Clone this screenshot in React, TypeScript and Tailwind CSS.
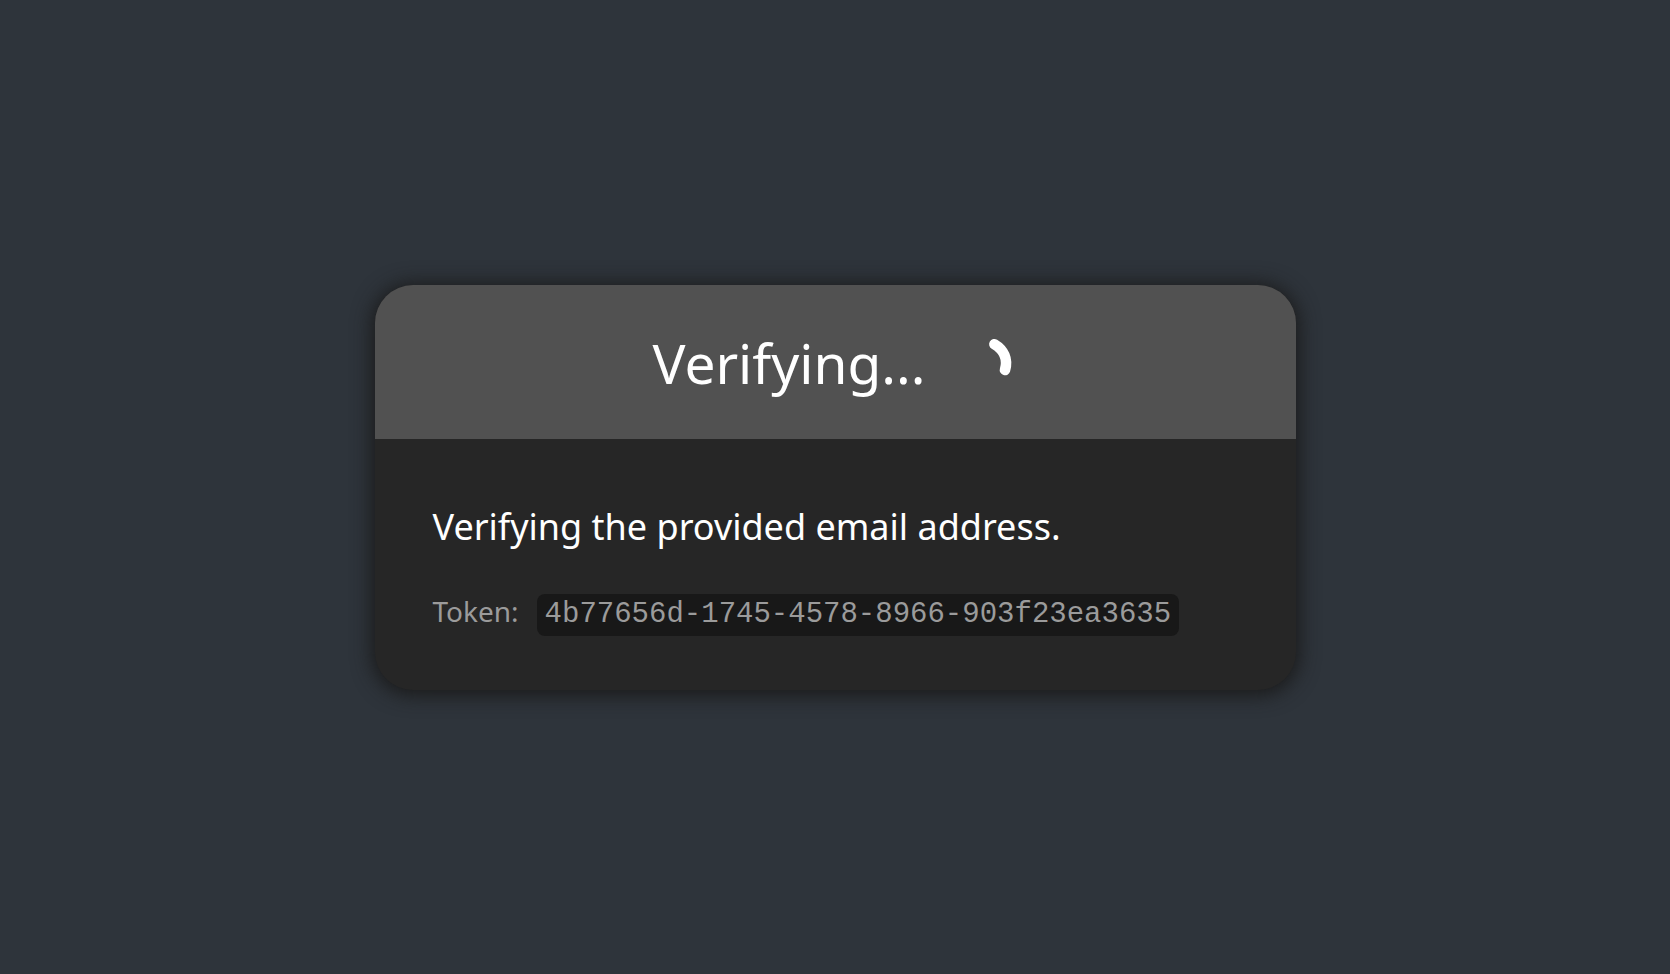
function Spinner() {
  return (
    <svg
      className="size-[60px] shrink-0"
      viewBox="0 0 60 60"
      fill="none"
      stroke="white"
      strokeWidth="10.6"
      strokeLinecap="round"
      role="img"
      aria-label="Loading"
    >
      <path d="M36.4 11.2C45.8 16.8 50.2 26 47 37" />
    </svg>
  );
}

export default function App() {
  return (
    <main className="flex min-h-screen items-center justify-center bg-[#2e343b] p-6 font-['Noto_Sans',sans-serif] text-white">
      <section className="w-full max-w-[921px] overflow-hidden rounded-[38px] bg-[#262626] shadow-[0_2px_20px_3px_#1a1a1a]">
        <header className="flex items-center justify-center gap-8 bg-[#515151] px-14 pt-[37px] pb-[35px]">
          <h1 className="text-[55px] leading-[82px]">Verifying...</h1>
          <Spinner />
        </header>
        <div className="flex flex-col gap-[37px] px-[58px] pt-[62px] pb-[54px]">
          <p className="text-[36px] leading-[52px]">Verifying the provided email address.</p>
          <p className="flex items-baseline gap-[18px] text-[28px] leading-[42px] text-[#9b9b9b]">
            <span>Token:</span>
            <code className="rounded-lg bg-[#181818] px-2 font-['Liberation_Mono',monospace] text-[29px] leading-[42px]">
              4b77656d-1745-4578-8966-903f23ea3635
            </code>
          </p>
        </div>
      </section>
    </main>
  );
}
